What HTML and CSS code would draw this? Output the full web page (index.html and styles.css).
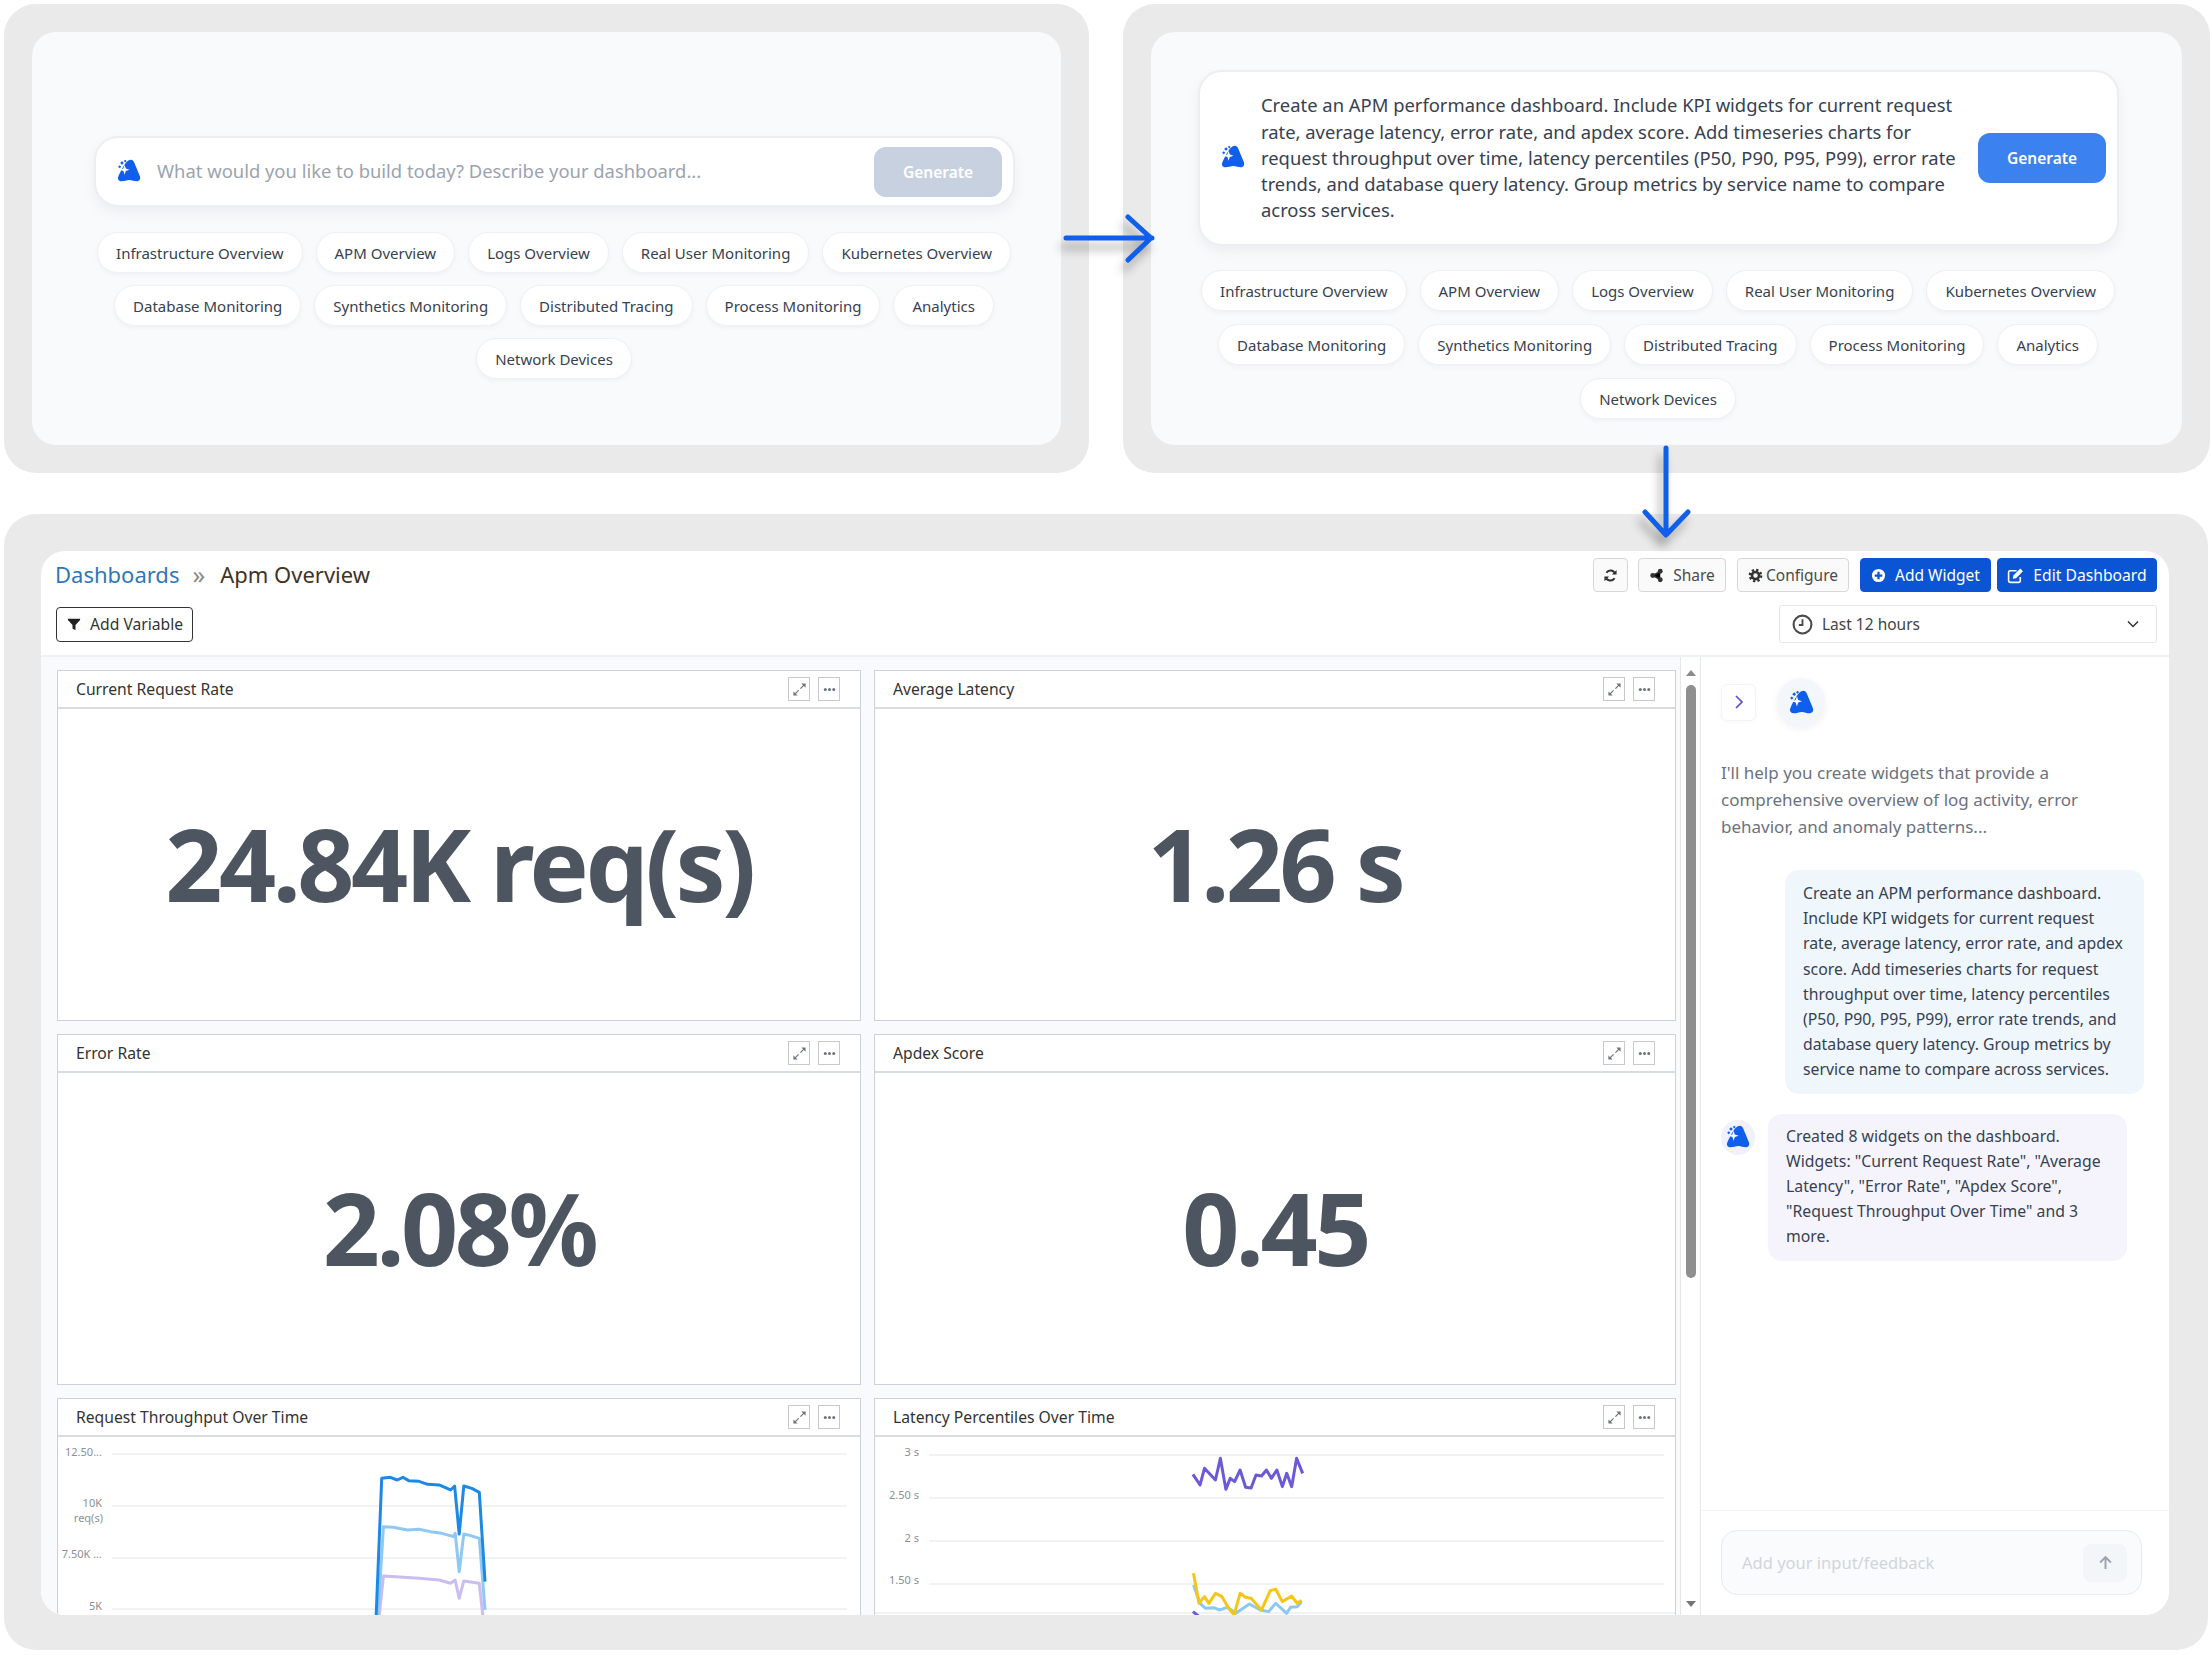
FILE: index.html
```html
<!DOCTYPE html>
<html lang="en">
<head>
<meta charset="utf-8">
<title>AI dashboard generation flow</title>
<link rel="stylesheet" href="styles.css">
</head>
<body>
<svg class="defs" width="0" height="0" aria-hidden="true">
  <symbol id="logo" viewBox="0 0 24 24">
    <path fill="#0f5fec" d="M14 .8c1.400 0 2.400 1 3 2.300l5.900 14.200c1 2.700-.5 5-3.100 5-2.800 0-4.700-1.300-7.500-1.300-2.900 0-4.700 1.300-8.100 1.300-2.500 0-3.800-2.200-3-4.500 1.300-3.500 3.700-7.800 5.700-11 1.800-2.900 3.900-6 7.100-6z"/>
    <path fill="#fff" d="M7.600 5.800l1.200 3.800 3.700 1.200-3.700 1.200-1.200 3.800-1.200-3.800-3.700-1.200 3.700-1.200z"/>
    <rect fill="#0f5fec" x="3.700" y="2.700" width="2.600" height="2.600" transform="rotate(45 5 4)"/>
    <rect fill="#0f5fec" x="7.200" y="1.100" width="2" height="2" transform="rotate(45 8.200 2.100)"/>
    <rect fill="#0f5fec" x="1.600" y="6.600" width="2.200" height="2.200" transform="rotate(45 2.700 7.700)"/>
  </symbol>
  <symbol id="expand" viewBox="0 0 16 16">
    <path fill="none" stroke="#6b7280" stroke-width="1.300" d="M9 7l4.500-4.500M3 13l4-4"/>
    <path fill="#6b7280" d="M10 1.500h4.500V6zM1.500 10v4.500H6z"/>
  </symbol>
  <symbol id="dots" viewBox="0 0 16 16">
    <circle cx="3.500" cy="8" r="1.600" fill="#6b7280"/><circle cx="8" cy="8" r="1.600" fill="#6b7280"/><circle cx="12.500" cy="8" r="1.600" fill="#6b7280"/>
  </symbol>
</svg>

<main class="page">
  <div class="top-row">
    <section class="frame frame-a">
      <div class="canvas canvas-a">
        <div class="prompt prompt-empty">
          <svg class="logo"><use href="#logo"/></svg>
          <span class="placeholder">What would you like to build today? Describe your dashboard...</span>
          <button class="generate generate-off">Generate</button>
        </div>
        <div class="chips">
          <span class="chip">Infrastructure Overview</span><span class="chip">APM Overview</span><span class="chip">Logs Overview</span><span class="chip">Real User Monitoring</span><span class="chip">Kubernetes Overview</span>
          <span class="chip">Database Monitoring</span><span class="chip">Synthetics Monitoring</span><span class="chip">Distributed Tracing</span><span class="chip">Process Monitoring</span><span class="chip">Analytics</span>
          <span class="chip">Network Devices</span>
        </div>
      </div>
    </section>
    <section class="frame frame-b">
      <div class="canvas canvas-b">
        <div class="prompt prompt-full">
          <svg class="logo"><use href="#logo"/></svg>
          <p class="prompt-text">Create an APM performance dashboard. Include KPI widgets for current request rate, average latency, error rate, and apdex score. Add timeseries charts for request throughput over time, latency percentiles (P50, P90, P95, P99), error rate trends, and database query latency. Group metrics by service name to compare across services.</p>
          <button class="generate generate-on">Generate</button>
        </div>
        <div class="chips">
          <span class="chip">Infrastructure Overview</span><span class="chip">APM Overview</span><span class="chip">Logs Overview</span><span class="chip">Real User Monitoring</span><span class="chip">Kubernetes Overview</span>
          <span class="chip">Database Monitoring</span><span class="chip">Synthetics Monitoring</span><span class="chip">Distributed Tracing</span><span class="chip">Process Monitoring</span><span class="chip">Analytics</span>
          <span class="chip">Network Devices</span>
        </div>
      </div>
    </section>
  </div>

  <section class="frame frame-main">
    <div class="app">
      <header class="app-head">
        <div class="head-row">
          <nav class="crumbs"><a class="crumb-link">Dashboards</a><span class="crumb-sep">»</span><span class="crumb-now">Apm Overview</span></nav>
          <div class="actions">
            <button class="btn btn-icon"><svg class="ico" viewBox="0 0 16 16"><path fill="none" stroke="#333" stroke-width="2.200" d="M13 6.500A5.200 5.200 0 0 0 3.600 5M3 9.500A5.200 5.200 0 0 0 12.400 11"/><path fill="#333" d="M14.500 2v5h-5zM1.500 14V9h5z"/></svg></button>
            <button class="btn btn-share"><svg class="ico" viewBox="0 0 16 16"><path stroke="#333" stroke-width="1.600" d="M12 3.500L4 8l8 4.500"/><circle cx="12" cy="3.500" r="2.600" fill="#333"/><circle cx="4" cy="8" r="2.600" fill="#333"/><circle cx="12" cy="12.500" r="2.600" fill="#333"/></svg>Share</button>
            <button class="btn btn-config"><svg class="ico" viewBox="0 0 16 16"><circle cx="8" cy="8" r="6" fill="none" stroke="#333" stroke-width="2.600" stroke-dasharray="2.400 2.310"/><circle cx="8" cy="8" r="3.800" fill="none" stroke="#333" stroke-width="2.800"/></svg>Configure</button>
            <button class="btn btn-primary btn-add"><svg class="ico" viewBox="0 0 16 16"><circle cx="8" cy="8" r="7" fill="#fff"/><path stroke="#0b55d4" stroke-width="2.400" d="M8 4v8M4 8h8"/></svg>Add Widget</button>
            <button class="btn btn-primary btn-edit"><svg class="ico ico-edit" viewBox="0 0 16 16"><path fill="none" stroke="#fff" stroke-width="1.500" d="M12.500 9.500V13a1.500 1.500 0 0 1-1.500 1.500H3A1.500 1.500 0 0 1 1.500 13V5A1.500 1.500 0 0 1 3 3.500h6"/><path fill="#fff" d="M6 8l6.500-6.500 2.500 2.500L8.500 10.500 5.500 11z"/></svg>Edit Dashboard</button>
          </div>
        </div>
        <div class="head-row head-row-2">
          <button class="btn-var"><svg class="ico-s" viewBox="0 0 16 16"><path fill="#222" d="M1 2h14v1.500L9.700 9v6L6.300 13V9L1 3.500z"/></svg>Add Variable</button>
          <div class="timepick">
            <svg class="ico-clock" viewBox="0 0 20 20"><circle cx="10" cy="10" r="8.500" fill="none" stroke="#4b4b4b" stroke-width="2"/><path fill="none" stroke="#4b4b4b" stroke-width="1.800" d="M10 5v5.500H6.500"/></svg>
            <span class="time-label">Last 12 hours</span>
            <svg class="ico-chev" viewBox="0 0 14 14"><path fill="none" stroke="#333" stroke-width="1.500" d="M2 4.500l5 5 5-5"/></svg>
          </div>
        </div>
      </header>

      <div class="app-body">
        <div class="grid">
          <article class="card">
            <div class="card-head"><span class="card-title">Current Request Rate</span><span class="tool"><svg class="tool-ico"><use href="#expand"/></svg></span><span class="tool tool-last"><svg class="tool-ico"><use href="#dots"/></svg></span></div>
            <div class="kpi">24.84K req(s)</div>
          </article>
          <article class="card">
            <div class="card-head"><span class="card-title">Average Latency</span><span class="tool"><svg class="tool-ico"><use href="#expand"/></svg></span><span class="tool tool-last"><svg class="tool-ico"><use href="#dots"/></svg></span></div>
            <div class="kpi">1.26 s</div>
          </article>
          <article class="card">
            <div class="card-head"><span class="card-title">Error Rate</span><span class="tool"><svg class="tool-ico"><use href="#expand"/></svg></span><span class="tool tool-last"><svg class="tool-ico"><use href="#dots"/></svg></span></div>
            <div class="kpi">2.08%</div>
          </article>
          <article class="card">
            <div class="card-head"><span class="card-title">Apdex Score</span><span class="tool"><svg class="tool-ico"><use href="#expand"/></svg></span><span class="tool tool-last"><svg class="tool-ico"><use href="#dots"/></svg></span></div>
            <div class="kpi">0.45</div>
          </article>
          <article class="card">
            <div class="card-head"><span class="card-title">Request Throughput Over Time</span><span class="tool"><svg class="tool-ico"><use href="#expand"/></svg></span><span class="tool tool-last"><svg class="tool-ico"><use href="#dots"/></svg></span></div>
            <svg class="chart" width="802" height="300">
              <g class="grid-lines"><path d="M54 17H789M54 69H789M54 121H789M54 172H789"/></g>
              <g class="axis">
                <text x="44" y="19">12.50...</text><text x="44" y="70">10K</text><text x="45" y="85">req(s)</text><text x="44" y="121">7.50K ...</text><text x="44" y="173">5K</text>
              </g>
              <g transform="translate(-58,-57) scale(.574,.3333)" class="series">
                <polyline stroke="#cbbdf0" points="660,720 668,588 690,590 730,595 765,600 785,610 793,600 800,655 808,603 835,610 842,720"/>
                <polyline stroke="#8ec8f5" points="658,720 668,440 685,442 710,450 730,448 750,455 770,460 790,470 793,460 800,575 808,462 820,467 835,475 845,690"/>
                <polyline stroke="#1e88e5" points="655,720 665,295 680,292 692,300 702,292 712,302 730,304 745,313 765,315 785,330 792,318 800,462 808,318 822,325 835,337 845,605"/>
              </g>
            </svg>
          </article>
          <article class="card">
            <div class="card-head"><span class="card-title">Latency Percentiles Over Time</span><span class="tool"><svg class="tool-ico"><use href="#expand"/></svg></span><span class="tool tool-last"><svg class="tool-ico"><use href="#dots"/></svg></span></div>
            <svg class="chart" width="800" height="300">
              <g class="grid-lines"><path d="M54 18H789M54 61H789M54 104H789M54 147H789M0 176H800"/></g>
              <g class="axis">
                <text x="44" y="19">3 s</text><text x="44" y="62">2.50 s</text><text x="44" y="105">2 s</text><text x="44" y="147">1.50 s</text>
              </g>
              <g transform="translate(-15,-57) scale(.5485,.3333)" class="series">
                <polyline stroke="#6a5ad8" points="607,283 620,315 628,265 648,300 657,235 667,328 675,295 683,305 693,270 703,322 713,324 722,285 732,288 741,270 750,295 760,270 770,320 778,280 787,320 796,235 807,280"/>
                <polyline stroke="#8cc8f0" points="608,615 620,670 630,685 645,683 655,690 670,682 685,700 710,672 730,690 745,695 758,670 778,700 785,682 797,680 805,665"/>
                <polyline stroke="#f5c518" points="608,580 618,670 628,650 636,670 648,640 660,650 672,685 682,705 693,640 703,652 713,655 732,690 748,632 758,628 770,665 787,648 797,670 805,662"/>
                <polyline stroke="#6a5ad8" points="607,695 620,712"/>
              </g>
            </svg>
          </article>
        </div>
        <div class="scrollbar">
          <span class="arrow-up"></span>
          <span class="thumb"></span>
          <span class="arrow-down"></span>
        </div>
        <aside class="side">
          <div class="side-top">
            <div class="side-head">
              <span class="side-toggle"><svg class="ico-right" viewBox="0 0 10 16"><path fill="none" stroke="#5b4fc4" stroke-width="1.700" d="M2 2l6 6-6 6"/></svg></span>
              <span class="avatar"><svg class="avatar-logo"><use href="#logo"/></svg></span>
            </div>
            <p class="intro">I'll help you create widgets that provide a comprehensive overview of log activity, error behavior, and anomaly patterns...</p>
            <div class="msg-user">Create an APM performance dashboard. Include KPI widgets for current request rate, average latency, error rate, and apdex score. Add timeseries charts for request throughput over time, latency percentiles (P50, P90, P95, P99), error rate trends, and database query latency. Group metrics by service name to compare across services.</div>
            <div class="msg-bot-row">
              <span class="avatar-small"><svg class="avatar-small-logo"><use href="#logo"/></svg></span>
              <div class="msg-bot">Created 8 widgets on the dashboard. Widgets: "Current Request Rate", "Average Latency", "Error Rate", "Apdex Score", "Request Throughput Over Time" and 3 more.</div>
            </div>
          </div>
          <div class="side-foot">
            <div class="feedback">
              <span class="feedback-ph">Add your input/feedback</span>
              <span class="send"><svg class="ico-send" viewBox="0 0 14 14"><path fill="none" stroke="#9ca3af" stroke-width="1.800" d="M7 13V2M2 7l5-5 5 5"/></svg></span>
            </div>
          </div>
        </aside>
      </div>
    </div>
  </section>

  <svg class="flow-arrow arrow-right" width="110" height="60" viewBox="0 0 110 60"><path fill="none" stroke="#0f5fec" stroke-width="5" stroke-linecap="round" stroke-linejoin="round" d="M2 26H88M64 5l23 21-23 22"/></svg>
  <svg class="flow-arrow arrow-downward" width="60" height="100" viewBox="0 0 60 100"><path fill="none" stroke="#0f5fec" stroke-width="5" stroke-linecap="round" stroke-linejoin="round" d="M30 2V88M9 66l21 23 22-23"/></svg>
</main>
</body>
</html>
```
FILE: styles.css
```css
* { box-sizing: border-box; }
html, body { margin: 0; padding: 0; background: #fff; }
body { width: 2212px; height: 1655px; overflow: hidden; font-family: "Noto Sans", "Open Sans", sans-serif; color: #374151; }
button { font-family: inherit; }
.defs { position: absolute; }
.page { position: relative; padding: 4px 0 0 4px; width: 2212px; height: 1655px; }
.top-row { display: flex; gap: 34px; }
.frame { background: #eaeaea; border-radius: 32px; }
.frame-a { width: 1085px; height: 469px; padding: 28px; }
.frame-b { width: 1087px; height: 469px; padding: 28px 28px 28px 28px; }
.canvas { background: #f8fafc; border-radius: 24px; height: 413px; display: flex; flex-direction: column; align-items: flex-start; }
.canvas-a { padding: 104px 0 0 62px; }
.canvas-b { padding: 38px 0 0 47px; }
.prompt { display: flex; align-items: center; background: #fff; border: 2px solid #eceef0; border-radius: 24px; width: 921px; box-shadow: 0 6px 14px rgba(15, 23, 42, .05); }
.prompt-empty { height: 71px; padding: 0 11px 0 21px; }
.prompt-full { height: 176px; padding: 0 11px 0 21px; }
.logo { width: 24px; height: 24px; flex: none; margin-top: -2px; }
.placeholder { margin-left: 16px; flex: 1; font-size: 18.400px; color: #9ca3af; margin-top: -2px; }
.prompt-text { margin: 0 0 0 16px; flex: 1; font-size: 18.400px; line-height: 26.300px; color: #374151; }
.generate { border: 0; border-radius: 12px; width: 128px; height: 50px; color: #fff; font-size: 15.500px; font-weight: 600; flex: none; }
.generate-off { background: #c7d1e0; }
.generate-on { background: #3b82f0; margin-left: 10px; }
.chips { display: flex; flex-wrap: wrap; justify-content: center; gap: 12px 13px; width: 930px; margin: 25px 0 0 -5px; }
.canvas-b .chips { margin-top: 24px; gap: 13px 13px; }
.chip { background: #fff; border: 1px solid #eef0f3; border-radius: 22px; height: 41px; padding: 0 18px; display: flex; align-items: center; font-size: 15px; color: #374151; box-shadow: 0 2px 5px rgba(15, 23, 42, .04); }

.frame-main { margin-top: 41px; width: 2204px; height: 1136px; padding: 37px 39px 35px 37px; }
.app { background: #fff; border-radius: 24px; height: 1064px; overflow: hidden; display: flex; flex-direction: column; }
.app-head { height: 106px; flex: none; padding: 7px 12px 0 14px; border-bottom: 2px solid #eef1f4; }
.head-row { display: flex; justify-content: space-between; align-items: center; }
.head-row-2 { margin-top: 13px; padding-left: 1px; }
.crumbs { display: flex; align-items: center; font-size: 22px; margin-top: -3px; }
.crumb-link { color: #2f77b8; }
.crumb-sep { color: #8b8b8b; margin: 0 15px 0 13px; font-size: 25px; line-height: 30px; }
.crumb-now { color: #3f3426; }
.actions { display: flex; align-items: center; }
.btn { height: 34px; display: flex; align-items: center; justify-content: center; border: 1px solid #d5d7da; border-radius: 4px; background: #fafafa; font-size: 15.500px; color: #4a4a4a; padding: 0; }
.btn-icon { width: 35px; margin-right: 10px; }
.btn-share { width: 88px; margin-right: 11px; gap: 9px; }
.btn-config { width: 112px; margin-right: 11px; gap: 3px; }
.btn-primary { background: #0b55d4; border-color: #0b55d4; color: #fff; }
.btn-add { width: 131px; margin-right: 6px; gap: 9px; }
.btn-edit { width: 160px; gap: 9px; font-size: 15.700px; }
.ico { width: 15px; height: 15px; flex: none; }
.ico-edit { width: 17px; height: 17px; }
.btn-var { height: 35px; width: 137px; display: flex; align-items: center; gap: 9px; padding: 0 0 0 10px; background: #fff; border: 1px solid #333; border-radius: 4px; font-size: 15.700px; color: #333; }
.ico-s { width: 14px; height: 14px; }
.timepick { width: 378px; height: 38px; border: 1px solid #e4e6e9; border-radius: 3px; display: flex; align-items: center; padding: 0 16px 0 12px; font-size: 15.500px; color: #444; }
.ico-clock { width: 21px; height: 21px; flex: none; }
.time-label { margin-left: 9px; flex: 1; }
.ico-chev { width: 14px; height: 14px; }

.app-body { flex: 1; display: flex; min-height: 0; }
.grid { width: 1639px; flex: none; background: #f8fafc; padding: 13px 0 0 16px; display: grid; grid-template-columns: 804px 802px; grid-auto-rows: 351px; column-gap: 13px; row-gap: 13px; overflow: hidden; }
.card { background: #fff; border: 1px solid #ccd2d9; overflow: hidden; display: flex; flex-direction: column; }
.card-head { height: 38px; flex: none; display: flex; align-items: center; padding: 0 20px 0 18px; border-bottom: 2px solid #d8dde2; }
.card-title { flex: 1; font-size: 15.700px; color: #333; }
.tool { width: 22px; height: 24px; border: 1px solid #c9c9c9; display: flex; align-items: center; justify-content: center; margin-left: 8px; }
.tool-ico { width: 15px; height: 15px; }
.kpi { flex: 1; display: flex; align-items: center; justify-content: center; font-size: 100px; font-weight: 700; color: #4d5561; letter-spacing: -3.500px; padding-bottom: 4px; }
.chart { display: block; flex: none; }
.grid-lines path { stroke: #eceef0; stroke-width: 1.500; fill: none; }
.axis text { font-size: 11px; fill: #8a8f98; text-anchor: end; }
.series polyline { fill: none; stroke-width: 3; stroke-linejoin: round; vector-effect: non-scaling-stroke; }

.scrollbar { width: 21px; flex: none; background: #fff; position: relative; display: flex; flex-direction: column; align-items: center; padding: 13px 0 0 0; border-left: 1px solid #e5e8eb; border-right: 1px solid #e5e8eb; }
.arrow-up { width: 0; height: 0; border-left: 5px solid transparent; border-right: 5px solid transparent; border-bottom: 6px solid #8a8a8a; }
.thumb { width: 10px; height: 593px; margin-top: 9px; background: #8f8f8f; border-radius: 5px; }
.arrow-down { width: 0; height: 0; margin-top: auto; margin-bottom: 8px; border-left: 5px solid transparent; border-right: 5px solid transparent; border-top: 6px solid #777; }

.side { flex: 1; display: flex; flex-direction: column; background: #fff; min-width: 0; }
.side-top { flex: 1; padding: 21px 21px 0 20px; }
.side-head { display: flex; align-items: center; gap: 21px; }
.side-toggle { width: 35px; height: 37px; border: 1px solid #f3f4f6; border-radius: 6px; display: flex; align-items: center; justify-content: center; box-shadow: 0 1px 4px rgba(0, 0, 0, .03); }
.ico-right { width: 10px; height: 16px; }
.avatar { width: 48px; height: 48px; border-radius: 50%; background: #f3f6fb; display: flex; align-items: center; justify-content: center; box-shadow: 0 3px 8px rgba(15, 23, 42, .06); }
.avatar-logo { width: 25px; height: 25px; }
.intro { margin: 33px 0 0 0; font-size: 17px; line-height: 27px; color: #6b7280; }
.msg-user { margin: 30px 0 0 64px; width: 359px; padding: 11px 16px 11px 18px; background: #eff6fc; border-radius: 14px; font-size: 15.800px; line-height: 25.200px; color: #374151; }
.msg-bot-row { display: flex; margin-top: 20px; }
.avatar-small { width: 34px; height: 35px; margin-top: 6px; border-radius: 50%; background: #f0f1fa; display: flex; align-items: center; justify-content: center; flex: none; }
.avatar-small-logo { width: 24px; height: 24px; }
.msg-bot { margin-left: 13px; width: 359px; padding: 10px 16px 11px 18px; background: #f5f4fd; border-radius: 14px; font-size: 15.800px; line-height: 25.200px; color: #374151; }
.side-foot { height: 105px; flex: none; border-top: 1px solid #f3f4f6; padding: 19px 0 0 20px; }
.feedback { width: 421px; height: 65px; border: 1px solid #e7eaee; border-radius: 16px; background: #f9fbfd; display: flex; align-items: center; padding: 0 14px 0 20px; }
.feedback-ph { flex: 1; font-size: 16.500px; color: #d1d5db; }
.send { width: 44px; height: 38px; background: #f3f6f9; border-radius: 8px; display: flex; align-items: center; justify-content: center; }
.ico-send { width: 15px; height: 15px; }

.flow-arrow { position: absolute; filter: drop-shadow(-4px 9px 5px rgba(0, 0, 0, .32)); overflow: visible; }
.arrow-right { left: 1064px; top: 212px; }
.arrow-downward { left: 1636px; top: 446px; }
```
